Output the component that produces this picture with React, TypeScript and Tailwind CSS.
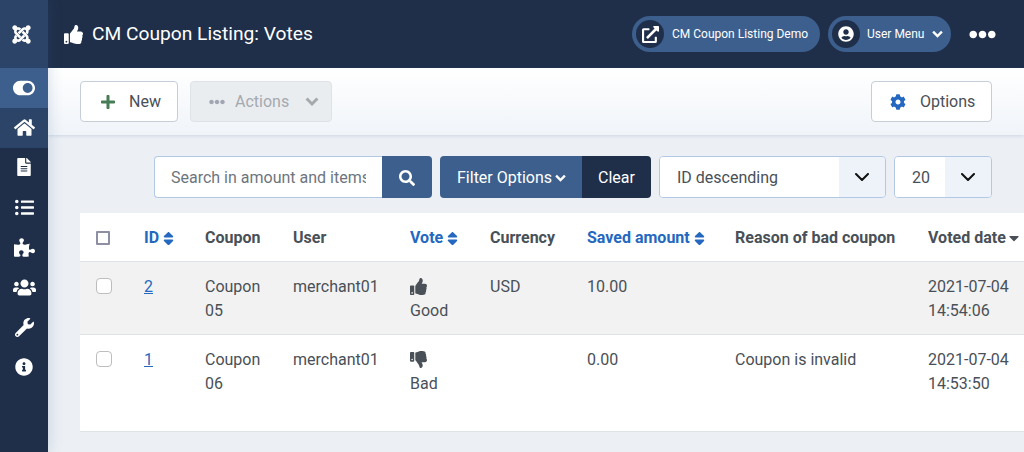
import {
  FaCaretDown,
  FaCog,
  FaEllipsisH,
  FaExternalLinkAlt,
  FaFileAlt,
  FaHome,
  FaInfoCircle,
  FaJoomla,
  FaListUl,
  FaPlus,
  FaPuzzlePiece,
  FaSearch,
  FaSort,
  FaThumbsDown,
  FaThumbsUp,
  FaToggleOn,
  FaUserCircle,
  FaUsers,
  FaWrench,
} from "react-icons/fa";

const Sidebar = () => (
  <aside className="relative z-10 w-12 shrink-0 flex flex-col bg-[#1f2f4a] text-white shadow-[0_0_14px_rgba(60,90,140,0.22)]">
    <div className="h-[68px] pr-1.5 flex items-center justify-center bg-[#2c4467]">
      <FaJoomla className="text-[21px]" />
    </div>
    <div className="h-10 flex items-center justify-center bg-[#3d5f8d]">
      <FaToggleOn className="text-[22px]" />
    </div>
    <div className="h-10 pb-0.5 flex items-center justify-center bg-[#2c4467]">
      <FaHome className="text-[21px]" />
    </div>
    <div className="h-10 pb-0.5 flex items-center justify-center">
      <FaFileAlt className="text-[18px]" />
    </div>
    <div className="h-10 pb-0.5 flex items-center justify-center">
      <FaListUl className="text-[19px]" />
    </div>
    <div className="h-10 pb-0.5 flex items-center justify-center">
      <FaPuzzlePiece className="text-[21px]" />
    </div>
    <div className="h-10 pb-0.5 flex items-center justify-center">
      <FaUsers className="text-[23px]" />
    </div>
    <div className="h-10 pb-0.5 flex items-center justify-center">
      <FaWrench className="text-[19px]" />
    </div>
    <div className="h-10 pb-0.5 flex items-center justify-center">
      <FaInfoCircle className="text-[18px]" />
    </div>
  </aside>
);

const BoldChevron = ({ className }: { className: string }) => (
  <svg viewBox="0 0 12 8" className={className} fill="none" stroke="currentColor" strokeWidth="2.6">
    <path d="M1.2 1.4L6 6.2l4.8-4.8" />
  </svg>
);

const Header = () => (
  <header className="h-[68px] shrink-0 flex items-center bg-[#1f2f4a] text-white pl-4 pr-7">
    <FaThumbsUp className="text-[19px] mr-[9px]" />
    <h1 className="text-[19.2px] font-normal leading-none">CM Coupon Listing: Votes</h1>
    <div className="ml-auto flex items-center">
      <div className="h-9 w-[188px] rounded-full bg-[#3d5f8d] flex items-center pl-1 text-xs">
        <span className="w-7 h-7 rounded-full bg-[#1f2f4a] flex items-center justify-center">
          <FaExternalLinkAlt className="text-[17px]" />
        </span>
        <span className="ml-2">CM Coupon Listing Demo</span>
      </div>
      <div className="h-9 w-[123px] ml-2 rounded-full bg-[#3d5f8d] flex items-center pl-1 text-xs">
        <span className="w-7 h-7 rounded-full bg-[#1f2f4a] flex items-center justify-center">
          <FaUserCircle className="text-[16px]" />
        </span>
        <span className="ml-[7px]">User Menu</span>
        <BoldChevron className="w-[11px] h-2 ml-2" />
      </div>
      <FaEllipsisH className="text-[27px] ml-[18px]" />
    </div>
  </header>
);

const Toolbar = () => (
  <div className="h-[67px] shrink-0 flex items-center justify-between px-8 bg-gradient-to-b from-white to-[#f0f4f9] shadow-[0_1px_3px_rgba(120,145,185,0.25)]">
    <div className="flex gap-3">
      <button className="h-[41px] w-[98px] flex items-center rounded border border-[#c6ced9] bg-white pl-[19px] text-[#495057]">
        <FaPlus className="text-base text-[#457d54]" />
        <span className="ml-[13px] pt-px">New</span>
      </button>
      <button className="h-[41px] w-[142px] flex items-center rounded border border-[#dfe3e7] bg-[#eaedf0] pl-[18px] text-[#a5a9ae]">
        <FaEllipsisH className="text-base text-[#a0a6b2]" />
        <span className="ml-[10px] pt-px">Actions</span>
        <BoldChevron className="w-[14px] h-[9px] ml-4" />
      </button>
    </div>
    <button className="h-[41px] w-[121px] flex items-center rounded border border-[#c6ced9] bg-white pl-[18px] text-[#495057]">
      <FaCog className="text-base text-[#2468bf]" />
      <span className="ml-[14px] pt-px">Options</span>
    </button>
  </div>
);

const SelectArrow = () => (
  <svg viewBox="0 0 14 8" className="w-[14px] h-2" fill="none" stroke="#111" strokeWidth="2" strokeLinecap="round" strokeLinejoin="round">
    <path d="M1 1l6 6 6-6" />
  </svg>
);

const Filters = () => (
  <div className="flex justify-end gap-2 pr-8 pt-[21px] text-base">
    <div className="flex h-[42px]">
      <input
        readOnly
        placeholder="Search in amount and items"
        className="w-[228px] rounded-l border border-r-0 border-[#b2c9e6] bg-white px-4 pt-px outline-none placeholder:text-[#6d757d]"
      />
      <button className="w-[50px] rounded-r bg-[#3d5f8d] text-white flex items-center justify-center pt-px">
        <FaSearch className="text-base" />
      </button>
    </div>
    <div className="flex h-[42px] text-white">
      <button className="w-[142px] rounded-l bg-[#3d5f8d] flex items-center pl-[17px] pt-px">
        Filter Options
        <BoldChevron className="w-[11px] h-2 ml-[3px]" />
      </button>
      <button className="w-[69px] rounded-r bg-[#1f2f4a] pt-px">Clear</button>
    </div>
    <div className="flex h-[42px] w-[227px] rounded border border-[#b2c9e6] overflow-hidden text-[#495057]">
      <div className="flex-1 bg-white pl-[17px] pt-px flex items-center">ID descending</div>
      <div className="w-[46px] bg-[#eef3f9] flex items-center justify-center">
        <SelectArrow />
      </div>
    </div>
    <div className="flex h-[42px] w-[98px] rounded border border-[#b2c9e6] overflow-hidden text-[#495057]">
      <div className="flex-1 bg-white pl-[17px] pt-px flex items-center">20</div>
      <div className="w-[46px] bg-[#eef3f9] flex items-center justify-center">
        <SelectArrow />
      </div>
    </div>
  </div>
);

const Check = ({ head }: { head?: boolean }) => (
  <span
    className={
      head
        ? "block w-[14px] h-[14px] border-2 border-[#8d8fa3] rounded-[1px] bg-white"
        : "block w-4 h-4 border border-[#bdbdbd] rounded bg-white"
    }
  />
);

const SortHead = ({ label }: { label: string }) => (
  <span className="inline-flex items-center gap-px text-[#2468bf]">
    {label}
    <FaSort className="text-[17px]" />
  </span>
);

const th = "px-4 pt-[3px] text-left align-middle whitespace-nowrap";
const cell = "px-4 pt-[13px] align-top font-normal text-left";

const VotesTable = () => (
  <div className="mt-[15px] ml-8 overflow-hidden bg-white border-b border-[#dfe3e7]">
    <table className="w-[960px] table-fixed border-collapse text-[#495057] leading-6">
      <colgroup>
        <col className="w-12" />
        <col className="w-[61px]" />
        <col className="w-[88px]" />
        <col className="w-[117px]" />
        <col className="w-20" />
        <col className="w-[97px]" />
        <col className="w-[148px]" />
        <col className="w-[193px]" />
        <col className="w-[128px]" />
      </colgroup>
      <thead>
        <tr className="h-[48px] border-b border-[#dfe3e7] font-bold">
          <th className="pl-4 pt-[3px] align-middle"><Check head /></th>
          <th className={th}><SortHead label="ID" /></th>
          <th className={th}>Coupon</th>
          <th className={th}>User</th>
          <th className={th}><SortHead label="Vote" /></th>
          <th className={th}>Currency</th>
          <th className={th}><SortHead label="Saved amount" /></th>
          <th className={th}>Reason of bad coupon</th>
          <th className={th}>
            <span className="inline-flex items-center">Voted date <FaCaretDown className="text-base" /></span>
          </th>
        </tr>
      </thead>
      <tbody>
        <tr className="h-[73px] bg-[#f2f2f2] border-b border-[#dfe3e7]">
          <td className={cell}><span className="block mt-[3px]"><Check /></span></td>
          <td className={cell}><a className="text-[#2468bf] underline">2</a></td>
          <td className={cell}>Coupon 05</td>
          <td className={cell}>merchant01</td>
          <td className={cell}><FaThumbsUp className="text-[17px] mt-[3px] mb-1" />Good</td>
          <td className={cell}>USD</td>
          <td className={cell}>10.00</td>
          <td className={cell}></td>
          <td className="pl-4 pt-[13px] align-top whitespace-nowrap">2021-07-04<br />14:54:06</td>
        </tr>
        <tr className="h-[97px]">
          <td className={cell}><span className="block mt-[3px]"><Check /></span></td>
          <td className={cell}><a className="text-[#2468bf] underline">1</a></td>
          <td className={cell}>Coupon 06</td>
          <td className={cell}>merchant01</td>
          <td className={cell}><FaThumbsDown className="text-[17px] mt-[3px] mb-1" />Bad</td>
          <td className={cell}></td>
          <td className={cell}>0.00</td>
          <td className={cell}>Coupon is invalid</td>
          <td className="pl-4 pt-[13px] align-top whitespace-nowrap">2021-07-04<br />14:53:50</td>
        </tr>
      </tbody>
    </table>
  </div>
);

export default function App() {
  return (
    <div className="flex w-[1024px] h-[452px] overflow-hidden bg-[#ecf0f5] font-['Roboto',sans-serif]">
      <Sidebar />
      <main className="flex-1 min-w-0 flex flex-col">
        <Header />
        <Toolbar />
        <Filters />
        <VotesTable />
      </main>
    </div>
  );
}
